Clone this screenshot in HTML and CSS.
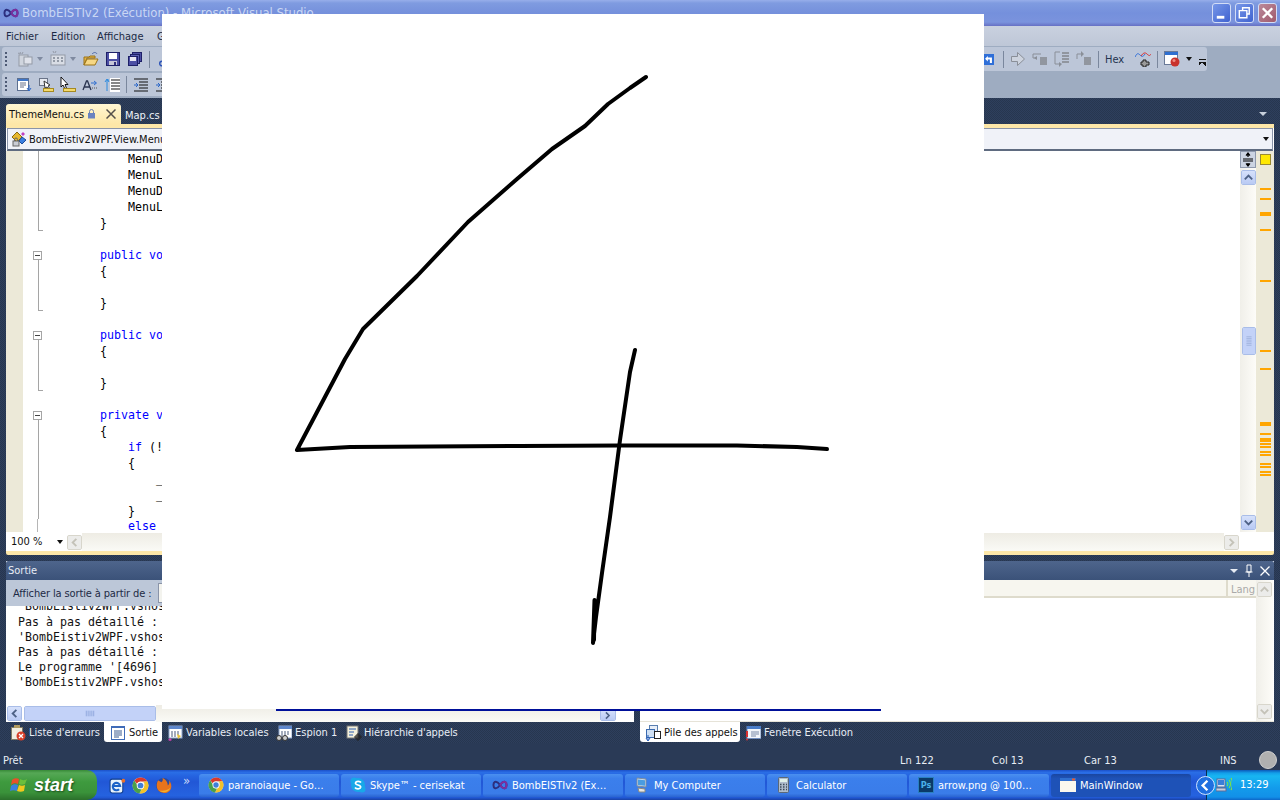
FILE: index.html
```html
<!DOCTYPE html>
<html lang="fr">
<head>
<meta charset="utf-8">
<title>BombEISTIv2 (Exécution) - Microsoft Visual Studio</title>
<link rel="stylesheet" href="styles.css">
</head>
<body>
<svg class="sprite" xmlns="http://www.w3.org/2000/svg">
  <symbol id="vs" viewBox="0 0 16 16"><path d="M8 8C6 5 4 4.500 2.800 5 1 5.800 1 10.200 2.800 11 4 11.500 6 11 8 8 10 5 12 4.500 13.200 5 15 5.800 15 10.200 13.200 11 12 11.500 10 11 8 8Z" fill="none" stroke="#2c2f7f" stroke-width="2"/><path d="M8 8C10 5 12 4.500 13.200 5 15 5.800 15 10.200 13.200 11 12 11.500 10 11 8 8" fill="none" stroke="#7d2f9f" stroke-width="2"/></symbol>
  <symbol id="ol-line" viewBox="0 0 21 16"><rect x="15" width="1" height="16" fill="#a5a5a5"/></symbol>
  <symbol id="ol-tick" viewBox="0 0 21 16"><path d="M15 0h1v15h4v1h-5z" fill="#a5a5a5"/></symbol>
  <symbol id="ol-box" viewBox="0 0 21 16"><rect x="15" y="13" width="1" height="3" fill="#a5a5a5"/><rect x="10.500" y="4.500" width="8" height="8" fill="#fff" stroke="#a5a5a5"/><rect x="12" y="8" width="5" height="1" fill="#444"/></symbol>
  <symbol id="newproj" viewBox="0 0 16 16"><rect x="2" y="4" width="9" height="11" fill="#d4d8e0" stroke="#8d939e"/><rect x="7" y="6" width="8" height="7" fill="#e6e8ee" stroke="#8d939e"/><path d="M3 1l1 2M6 1L5 3M1 2l2 1" stroke="#8d939e"/></symbol>
  <symbol id="additem" viewBox="0 0 16 16"><rect x="1" y="4" width="14" height="10" fill="#dfe2e8" stroke="#8d939e"/><path d="M3 7h2M7 7h2M11 7h2M3 10h2M7 10h2M11 10h2" stroke="#8d939e" stroke-width="2"/><path d="M3 0l1 2M6 0L5 2" stroke="#8d939e"/></symbol>
  <symbol id="folder" viewBox="0 0 16 16"><path d="M1 14V6h5l1-1h5v2H4L1 14z" fill="#e6b646" stroke="#9a7318"/><path d="M1 14L4 8h11l-3 6z" fill="#f6d784" stroke="#9a7318"/><path d="M9 3c2-2 4-2 5 0" fill="none" stroke="#4f6aa8"/></symbol>
  <symbol id="save" viewBox="0 0 16 16"><rect x="1.500" y="1.500" width="13" height="13" fill="#4c4fa4" stroke="#1e2068"/><rect x="4" y="2" width="8" height="6" fill="#fff"/><rect x="4" y="10" width="8" height="4" fill="#c8c8d8"/><rect x="9" y="11" width="2" height="3" fill="#30307a"/></symbol>
  <symbol id="saveall" viewBox="0 0 16 16"><rect x="5.500" y="1.500" width="9" height="9" fill="#4c4fa4" stroke="#1e2068"/><rect x="3.500" y="3.500" width="9" height="9" fill="#5c60b4" stroke="#1e2068"/><rect x="1.500" y="5.500" width="9" height="9" fill="#4c4fa4" stroke="#1e2068"/><rect x="3" y="6" width="6" height="4" fill="#e8e8f4"/></symbol>
  <symbol id="scissor" viewBox="0 0 16 16"><path d="M5 1l5 9M11 1L6 10" stroke="#555" fill="none"/><circle cx="4" cy="12.500" r="2.300" fill="none" stroke="#2f55b8" stroke-width="1.500"/><circle cx="12" cy="12.500" r="2.300" fill="none" stroke="#2f55b8" stroke-width="1.500"/></symbol>
  <symbol id="doclist" viewBox="0 0 16 16"><rect x="1.500" y="1.500" width="11" height="12" fill="#fff" stroke="#5c6f90"/><rect x="2" y="2" width="10" height="2" fill="#3f76c8"/><path d="M4 6h6M4 8h6M4 10h4" stroke="#66708a"/><path d="M13 8v5M11 11l2 3 2-3" stroke="#2a66c8" fill="none"/></symbol>
  <symbol id="tagarrow" viewBox="0 0 16 16"><rect x="1.500" y="1.500" width="8" height="7" fill="#e7eaf0" stroke="#6a7488"/><path d="M6 4l6 4-2 1 2 3-1 1-2-3-2 1z" fill="#fff" stroke="#333"/><rect x="5.500" y="11.500" width="10" height="3" fill="#f5d96b" stroke="#a58a20"/></symbol>
  <symbol id="cursorbar" viewBox="0 0 16 16"><path d="M1 0v10l2-2 2 4 1.500-.7L5 7.500h3z" fill="#fff" stroke="#000" stroke-width=".9"/><rect x="3.500" y="11.500" width="12" height="3" fill="#f5d96b" stroke="#a58a20"/></symbol>
  <symbol id="aarrow" viewBox="0 0 16 16"><path d="M1 13L4.500 4h1L9 13M2.500 10h5" fill="none" stroke="#2a3450" stroke-width="1.300"/><path d="M9 6h5M12 4l2.500 2L12 8" fill="none" stroke="#2f6fd0"/><path d="M10 11h1M12 11h1M14 11h1" stroke="#555"/></symbol>
  <symbol id="bracketdoc" viewBox="0 0 16 16"><path d="M3 14V3h2M1 5l2-3 2 3" fill="none" stroke="#2a8ae0"/><rect x="6" y="1" width="10" height="14" fill="#fff"/><path d="M7 3h9M7 6h9M7 9h9M7 12h9" stroke="#111" stroke-width="1.200"/></symbol>
  <symbol id="indent" viewBox="0 0 16 16"><path d="M1 2h14M6 5h9M6 8h9M6 11h9M1 14h14" stroke="#111"/><path d="M1 8h3M3 6l2 2-2 2" fill="none" stroke="#2a66c8"/></symbol>
  <symbol id="backblue" viewBox="0 0 16 16"><rect width="16" height="16" fill="#2f6fd8"/><path d="M7 3L3 7l4 4V8h3v5h3V5H7z" fill="#fff"/></symbol>
  <symbol id="rightgray" viewBox="0 0 16 16"><path d="M1.500 5.500h6v-4l7 6.500-7 6.500v-4h-6z" fill="#cdd3de" stroke="#8a8f98"/></symbol>
  <symbol id="step1" viewBox="0 0 16 16"><path d="M1 3h8M1 3v4h4" fill="none" stroke="#8a8f98"/><path d="M5 5l-3 2 3 2z" fill="#8a8f98"/><path d="M8 7h7M8 9h7M8 11h7M8 13h7" stroke="#666"/></symbol>
  <symbol id="step2" viewBox="0 0 16 16"><path d="M6 1H1v12h4" fill="none" stroke="#8a8f98"/><path d="M5 11l3 2-3 3z" fill="#8a8f98"/><path d="M8 2h7M8 5h7M8 8h7M8 11h7" stroke="#666"/></symbol>
  <symbol id="step3" viewBox="0 0 16 16"><path d="M1 8V3h6" fill="none" stroke="#8a8f98"/><path d="M5 0l3 3-3 3z" fill="#8a8f98"/><path d="M8 7h7M8 9h7M8 11h7M8 13h7" stroke="#666"/></symbol>
  <symbol id="wave" viewBox="0 0 16 16"><path d="M0 6c2-4 3-4 5-2s3 2 5-1" fill="none" stroke="#2f6fd8"/><path d="M6 5c2-3 4-4 6-2s3 2 4 0" fill="none" stroke="#d83030"/><path d="M8 9h3v2h3v3h-3v2H8v-2H6v-3h2z" fill="#999" stroke="#222"/></symbol>
  <symbol id="winrec" viewBox="0 0 16 16"><rect x=".5" y=".5" width="13" height="13" fill="#fff" stroke="#6a7a98"/><rect x="1" y="1" width="13" height="3" fill="#2f6fd0"/><circle cx="11" cy="11" r="4.500" fill="#c8322c"/><circle cx="10" cy="9.500" r="1.500" fill="#ee8a80"/></symbol>
  <symbol id="lock" viewBox="0 0 9 10"><path d="M2.500 4V2.500a2 2 0 0 1 4 0V4" fill="none" stroke="#6a7fb0"/><rect x="1" y="4" width="7" height="5.500" fill="#6a83c0"/></symbol>
  <symbol id="nsicon" viewBox="0 0 16 16"><path d="M6 1l5 5-5 5-5-5z" fill="#e8b82c" stroke="#8a6a10"/><path d="M11 6l4 3-4 4-3-3z" fill="#3a7fe0" stroke="#1a4a9a"/><rect x="2" y="10" width="6" height="5" fill="#c9ccd4" stroke="#666"/><path d="M3.500 10V8.500a1.500 1.500 0 0 1 3 0V10" fill="none" stroke="#666"/><path d="M12 1l2 2-2 2-2-2z" fill="#c040c0"/></symbol>
  <symbol id="errlist" viewBox="0 0 16 16"><rect x="1.500" y="2.500" width="11" height="12" fill="#f2efe2" stroke="#7f7a66"/><rect x="4" y="0" width="6" height="3" fill="#b09a60"/><circle cx="11" cy="11" r="4.500" fill="#d8402a"/><path d="M9 9l4 4M13 9l-4 4" stroke="#fff" stroke-width="1.300"/></symbol>
  <symbol id="outicon" viewBox="0 0 16 16"><rect x="1" y="1" width="14" height="14" fill="#3f6bb8"/><rect x="2" y="3" width="12" height="11" fill="#fff"/><path d="M4 6h8M4 8h8M4 10h8M4 12h5" stroke="#3a5a90"/></symbol>
  <symbol id="locals" viewBox="0 0 16 16"><rect x="2" y="1" width="13" height="12" fill="#fff" stroke="#8fa6cc"/><rect x="2" y="1" width="13" height="3" fill="#5f87cc"/><path d="M4 7h9M4 9h9M4 11h6" stroke="#4a5a7a" stroke-dasharray="2 1"/><path d="M10 9l4 2-3 3z" fill="#e8c23a"/><path d="M3 13l2 2-2 1-2-1z" fill="#d040b0"/></symbol>
  <symbol id="watch" viewBox="0 0 16 16"><rect x="3" y="1" width="13" height="12" fill="#fff" stroke="#8fa6cc"/><rect x="3" y="1" width="13" height="3" fill="#5f87cc"/><path d="M5 7h9M5 9h9M5 11h6" stroke="#4a5a7a" stroke-dasharray="2 1"/><circle cx="3" cy="13" r="2.500" fill="#ccc" stroke="#333"/><circle cx="9" cy="13" r="2.500" fill="#ccc" stroke="#333"/></symbol>
  <symbol id="hier" viewBox="0 0 16 16"><rect x="1" y="1" width="11" height="12" fill="#f4f1dc" stroke="#777"/><path d="M3 4h7M3 7h5M3 10h4" stroke="#2f5fb0"/><path d="M12 8v8M8 12h8M10 10h4v4h-4z" stroke="#222" fill="none"/></symbol>
  <symbol id="stack" viewBox="0 0 16 16"><rect x="4.500" y=".5" width="8" height="8" fill="#e7eef8" stroke="#5a7fb0"/><rect x="1.500" y="4.500" width="8" height="8" fill="#cfe0f4" stroke="#3a6ab0"/><rect x="9.500" y="6.500" width="6" height="7" fill="#fff" stroke="#222"/><path d="M3 10v5M1 13l2 3 2-3" stroke="#1f58b8" fill="none"/></symbol>
  <symbol id="immediate" viewBox="0 0 16 16"><rect x="2" y="1.500" width="14" height="12" fill="#f2f5fa" stroke="#6f8cbe"/><rect x="2" y="1" width="14" height="3" fill="#4a7cc8"/><path d="M6 7h8M6 9h8M6 11h5" stroke="#7a8aa8" stroke-width="1"/><path d="M2 6v6" stroke="#d83030" stroke-width="2"/><circle cx="2" cy="14.500" r="1" fill="#d83030"/></symbol>
  <symbol id="xpflag" viewBox="0 0 20 20"><path d="M2 5c2-2 5-2 7-1l-1 5C6 8 3 8 1 10z" fill="#e8502a"/><path d="M10 4c2 1 4 2 7 0l-2 5c-2 1-5 1-6 0z" fill="#6cbf3c"/><path d="M1 11c2-2 5-2 7-1l-1 6c-2-1-5-1-7 0z" fill="#3a7fe0"/><path d="M9 10c2 1 4 1 6 0l-1 6c-2 1-5 1-7 0z" fill="#f2c81e"/></symbol>
  <symbol id="ie" viewBox="0 0 16 16"><rect x="1" y="2" width="12" height="13" rx="2" fill="#e6f2fc" stroke="#12408f"/><path d="M4 8.500h6.500A3.500 3.500 0 1 0 9.500 11.500" fill="none" stroke="#1a62c8" stroke-width="2"/><circle cx="13.500" cy="3.500" r="1.800" fill="#e8702c"/></symbol>
  <symbol id="chrome" viewBox="0 0 16 16"><circle cx="8" cy="8" r="7.500" fill="#ddd"/><path d="M8 .5a7.500 7.500 0 0 1 6.500 3.800H8a3.700 3.700 0 0 0-3.300 2L2.200 3.200A7.500 7.500 0 0 1 8 .5z" fill="#d9392c"/><path d="M14.500 4.300A7.500 7.500 0 0 1 7 15.400l3.300-5.500a3.700 3.700 0 0 0 .4-5.600z" fill="#f2c229"/><path d="M7 15.400A7.500 7.500 0 0 1 2.200 3.200l3 5.300A3.700 3.700 0 0 0 9 11.500z" fill="#4aa04a"/><circle cx="8" cy="8" r="3.500" fill="#fff"/><circle cx="8" cy="8" r="2.700" fill="#3f7fd8"/></symbol>
  <symbol id="firefox" viewBox="0 0 16 16"><circle cx="8" cy="8" r="7" fill="#2a4a9c"/><path d="M3 3c-2 3-2 8 1 10.500s9 2.500 11-2.500c1-3 0-6-2-8 1 2 .5 4-1 5 0-3-2-6-5-7 1 2 0 3-1 4-1-1-2-1-3-2z" fill="#e8741c"/><path d="M4 13c3 2.500 9 1.500 10.500-3-2 2-6 3-10.500 3z" fill="#f4b02a"/></symbol>
  <symbol id="skype" viewBox="0 0 16 16"><circle cx="8" cy="8" r="7" fill="#18a8e8"/><circle cx="4" cy="4" r="3.500" fill="#18a8e8"/><circle cx="12" cy="12" r="3.500" fill="#18a8e8"/><path d="M11 5.500C10 4 6 3.800 5.500 6c-.4 2.500 5.500 1.500 5.200 4.200-.4 2.200-4.700 2-5.700.3" fill="none" stroke="#fff" stroke-width="1.700"/></symbol>
  <symbol id="mypc" viewBox="0 0 16 16"><path d="M3 1l9 1v8l-9-1z" fill="#cfe0ee" stroke="#7d8da0"/><path d="M4 2.500l7 .8v5.500l-7-.8z" fill="#4a9ce0"/><path d="M4 11l7 1v3H5z" fill="#e8e8e4" stroke="#8a8a80"/></symbol>
  <symbol id="calc" viewBox="0 0 16 16"><rect x="2.500" y=".5" width="10" height="15" rx="1" fill="#aebccb" stroke="#5a6878"/><rect x="4" y="2" width="7" height="3" fill="#dff0e8"/><path d="M4 7.500h1.500M7 7.500h1.500M10 7.500h1M4 10h1.500M7 10h1.500M10 10h1M4 12.500h1.500M7 12.500h1.500M10 12.500h1" stroke="#3d4a58" stroke-width="1.300"/></symbol>
  <symbol id="win" viewBox="0 0 16 16"><rect y="1" width="16" height="14" fill="#fff"/><rect y="1" width="16" height="3" fill="#2f6fd0"/><rect x="12" y="1.500" width="3" height="2" fill="#e85a30"/><rect y="4" width="16" height="11" fill="#fbf8ee"/></symbol>
  <symbol id="tray" viewBox="0 0 16 16"><rect x="1" y="2" width="8" height="8" fill="#d8e4f4" stroke="#5a6a9a"/><rect x="2" y="3" width="6" height="5" fill="#3a7fd8"/><rect x="0" y="11" width="10" height="3" fill="#c8d0dc" stroke="#5a6a9a"/><path d="M11 5c1 1 1 3 0 4M13 3c2 2 2 6 0 8M15 1c2 3 2 9 0 12" fill="none" stroke="#7ee04a" stroke-width="1.200"/></symbol>
</svg>

<div class="app">
  <header class="titlebar">
    <svg class="ico16 title-ico"><use href="#vs"/></svg>
    <span class="title-text">BombEISTIv2 (Exécution) - Microsoft Visual Studio</span>
    <div class="win-btns">
      <span class="win-btn"><svg viewBox="0 0 18 18"><rect x="4" y="12" width="8" height="3" fill="#fff"/></svg></span>
      <span class="win-btn"><svg viewBox="0 0 18 18"><path d="M7 6V3.500h7V10h-2.500M3.500 6.500h8V14h-8z" fill="none" stroke="#fff" stroke-width="1.500"/></svg></span>
      <span class="win-btn win-close"><svg viewBox="0 0 18 18"><path d="M4 4l10 10M14 4L4 14" stroke="#fff" stroke-width="2.500"/></svg></span>
    </div>
  </header>

  <nav class="menubar">
    <span class="m-fichier">Fichier</span><span class="m-edition">Edition</span><span class="m-affichage">Affichage</span><span>G</span>
  </nav>

  <div class="toolbars">
    <div class="toolbar tb-one">
      <i class="grip"></i>
      <div class="tb-group tb-left">
        <svg class="ico16 dim"><use href="#newproj"/></svg><i class="drop dim-drop"></i>
        <svg class="ico16 dim"><use href="#additem"/></svg><i class="drop dim-drop"></i>
        <svg class="ico16"><use href="#folder"/></svg>
        <svg class="ico16"><use href="#save"/></svg>
        <svg class="ico16"><use href="#saveall"/></svg>
        <i class="sep"></i>
        <svg class="ico16"><use href="#scissor"/></svg>
      </div>
      <div class="tb-group tb-right">
        <svg class="ico-back"><use href="#backblue"/></svg>
        <i class="sep"></i>
        <svg class="ico16"><use href="#rightgray"/></svg>
        <svg class="ico16"><use href="#step1"/></svg>
        <svg class="ico16"><use href="#step2"/></svg>
        <svg class="ico16"><use href="#step3"/></svg>
        <i class="sep"></i>
        <span class="hex">Hex</span>
        <svg class="ico16"><use href="#wave"/></svg>
        <i class="sep"></i>
        <svg class="ico16"><use href="#winrec"/></svg>
        <i class="drop"></i>
        <i class="overflow"></i>
      </div>
    </div>
    <div class="toolbar tb-two">
      <i class="grip"></i>
      <div class="tb-group tb-left2">
        <svg class="ico16"><use href="#doclist"/></svg>
        <svg class="ico16"><use href="#tagarrow"/></svg>
        <svg class="ico16"><use href="#cursorbar"/></svg>
        <svg class="ico16"><use href="#aarrow"/></svg>
        <svg class="ico16"><use href="#bracketdoc"/></svg>
        <i class="sep"></i>
        <svg class="ico16"><use href="#indent"/></svg>
        <svg class="ico16"><use href="#indent"/></svg>
      </div>
    </div>
  </div>

  <div class="doctabs">
    <div class="doctab-active">
      <span class="doctab-name">ThemeMenu.cs</span>
      <svg class="lock"><use href="#lock"/></svg>
      <svg class="doctab-x" viewBox="0 0 10 10"><path d="M.5.5l9 9M9.500.5l-9 9" stroke="#55504a" stroke-width="1.500"/></svg>
    </div>
    <span class="doctab">Map.cs</span>
    <i class="tabs-arrow"></i>
  </div>

  <section class="editor">
    <div class="addr">
      <svg class="ico16"><use href="#nsicon"/></svg>
      <span class="addr-text">BombEistiv2WPF.View.Menu</span>
      <i class="drop addr-drop"></i>
    </div>
    <div class="ed-body">
      <div class="strip"></div>
      <div class="code">
        <div class="row"><svg class="gut"><use href="#ol-line"/></svg><pre>            MenuD</pre></div>
        <div class="row"><svg class="gut"><use href="#ol-line"/></svg><pre>            MenuL</pre></div>
        <div class="row"><svg class="gut"><use href="#ol-line"/></svg><pre>            MenuD</pre></div>
        <div class="row"><svg class="gut"><use href="#ol-line"/></svg><pre>            MenuL</pre></div>
        <div class="row"><svg class="gut"><use href="#ol-tick"/></svg><pre>        }</pre></div>
        <div class="row"><svg class="gut"></svg><pre> </pre></div>
        <div class="row"><svg class="gut"><use href="#ol-box"/></svg><pre>        <b>public vo</b></pre></div>
        <div class="row"><svg class="gut"><use href="#ol-line"/></svg><pre>        {</pre></div>
        <div class="row"><svg class="gut"><use href="#ol-line"/></svg><pre> </pre></div>
        <div class="row"><svg class="gut"><use href="#ol-tick"/></svg><pre>        }</pre></div>
        <div class="row"><svg class="gut"></svg><pre> </pre></div>
        <div class="row"><svg class="gut"><use href="#ol-box"/></svg><pre>        <b>public vo</b></pre></div>
        <div class="row"><svg class="gut"><use href="#ol-line"/></svg><pre>        {</pre></div>
        <div class="row"><svg class="gut"><use href="#ol-line"/></svg><pre> </pre></div>
        <div class="row"><svg class="gut"><use href="#ol-tick"/></svg><pre>        }</pre></div>
        <div class="row"><svg class="gut"></svg><pre> </pre></div>
        <div class="row"><svg class="gut"><use href="#ol-box"/></svg><pre>        <b>private v</b></pre></div>
        <div class="row"><svg class="gut"><use href="#ol-line"/></svg><pre>        {</pre></div>
        <div class="row"><svg class="gut"><use href="#ol-line"/></svg><pre>            <b>if</b> (!</pre></div>
        <div class="row"><svg class="gut"><use href="#ol-line"/></svg><pre>            {</pre></div>
        <div class="row"><svg class="gut"><use href="#ol-line"/></svg><pre>                _</pre></div>
        <div class="row"><svg class="gut"><use href="#ol-line"/></svg><pre>                _</pre></div>
        <div class="row"><svg class="gut"><use href="#ol-line"/></svg><pre>            }</pre></div>
        <div class="row row-last"><svg class="gut"><use href="#ol-line"/></svg><pre>            <b>else</b></pre></div>
      </div>
      <div class="vscroll">
        <div class="splitter"><svg viewBox="0 0 14 15"><path d="M2 7h10M2 9h10" stroke="#000"/><path d="M7 1v4M5 3.500L7 1l2 2.500M7 14v-3M5 11.500L7 14l2-2.500" stroke="#000" stroke-width="1.200" fill="#000"/></svg></div>
        <div class="sb-btn sb-up"><svg viewBox="0 0 14 14"><path d="M3 9l4-4 4 4" fill="none" stroke="#4d6185" stroke-width="2"/></svg></div>
        <div class="sb-thumb"><svg viewBox="0 0 14 28"><path d="M4 9h6M4 11h6M4 13h6M4 15h6M4 17h6M4 19h6" stroke="#9fb2dc"/></svg></div>
        <div class="sb-btn sb-down"><svg viewBox="0 0 14 14"><path d="M3 5l4 4 4-4" fill="none" stroke="#4d6185" stroke-width="2"/></svg></div>
      </div>
      <svg class="marks" viewBox="0 0 18 381">
        <rect x="4.500" y="3.500" width="10" height="10" fill="#ffe800" stroke="#9a8a30"/>
        <g fill="#ffa500">
          <rect x="4" y="37" width="11" height="2"/><rect x="4" y="47" width="11" height="2"/><rect x="4" y="61" width="11" height="4"/><rect x="4" y="78" width="11" height="2"/><rect x="4" y="129" width="11" height="2"/><rect x="4" y="199" width="11" height="2"/><rect x="4" y="217" width="11" height="2"/><rect x="4" y="271" width="11" height="4"/><rect x="4" y="282" width="11" height="2"/><rect x="4" y="287" width="11" height="4"/><rect x="4" y="292" width="11" height="2"/><rect x="4" y="295" width="11" height="2"/><rect x="4" y="300" width="11" height="2"/><rect x="4" y="303" width="11" height="2"/><rect x="4" y="312" width="11" height="2"/><rect x="4" y="315" width="11" height="2"/><rect x="4" y="320" width="11" height="2"/><rect x="4" y="323" width="11" height="2"/>
        </g>
      </svg>
    </div>
    <div class="ed-foot">
      <div class="zoom"><span>100 %</span><i class="drop"></i></div>
      <div class="hbtn hbtn-left"><svg viewBox="0 0 14 14"><path d="M9 3L5 7l4 4" fill="none" stroke="#c4c2b8" stroke-width="2"/></svg></div>
      <div class="htrack"></div>
      <div class="hbtn"><svg viewBox="0 0 14 14"><path d="M5 3l4 4-4 4" fill="none" stroke="#c4c2b8" stroke-width="2"/></svg></div>
      <div class="ed-corner"></div>
    </div>
  </section>

  <div class="panels">
    <section class="panel panel-out">
      <div class="panel-head"><span>Sortie</span></div>
      <div class="out-tools"><span>Afficher la sortie à partir de :</span><i class="combo"></i></div>
      <div class="out-text">
        <pre class="clip-line">'BombEistiv2WPF.vshos</pre>
        <pre>Pas à pas détaillé :</pre>
        <pre>'BombEistiv2WPF.vshos</pre>
        <pre>Pas à pas détaillé :</pre>
        <pre>Le programme '[4696]</pre>
        <pre>'BombEistiv2WPF.vshos</pre>
      </div>
      <div class="out-scroll">
        <div class="sb-btn sb-left"><svg viewBox="0 0 14 14"><path d="M9 3L5 7l4 4" fill="none" stroke="#4d6185" stroke-width="2"/></svg></div>
        <div class="h-thumb"><svg viewBox="0 0 132 14"><path d="M62 4v6M64 4v6M66 4v6M68 4v6M70 4v6" stroke="#8fa6dc"/></svg></div>
        <div class="htrack"></div>
        <div class="sb-btn sb-right"><svg viewBox="0 0 14 14"><path d="M5 3l4 4-4 4" fill="none" stroke="#4d6185" stroke-width="2"/></svg></div>
        <div class="out-corner"></div>
      </div>
    </section>
    <section class="panel panel-stack">
      <div class="panel-head panel-head-r">
        <i class="head-arrow"></i>
        <svg class="head-pin" viewBox="0 0 8 13"><path d="M2 1h4v7H2zM.5 8h7M4 8v5" fill="none" stroke="#fff"/></svg>
        <svg class="head-x" viewBox="0 0 10 10"><path d="M.5.5l9 9M9.500.5l-9 9" stroke="#fff" stroke-width="1.300"/></svg>
      </div>
      <div class="stack-body">
        <div class="grid-head"><span class="gh-cell"></span><span class="gh-lang">Lang:</span></div>
        <div class="stack-scroll">
          <div class="sb-gray"><svg viewBox="0 0 14 14"><path d="M3 9l4-4 4 4" fill="none" stroke="#c4c2b8" stroke-width="2"/></svg></div>
          <div class="sb-gray"><svg viewBox="0 0 14 14"><path d="M3 5l4 4 4-4" fill="none" stroke="#c4c2b8" stroke-width="2"/></svg></div>
        </div>
      </div>
    </section>
  </div>

  <div class="btabs">
    <div class="btab-group">
      <span class="btab btab-err"><svg class="ico16"><use href="#errlist"/></svg>Liste d'erreurs</span>
      <span class="btab btab-on btab-sortie"><svg class="ico16"><use href="#outicon"/></svg>Sortie</span>
      <span class="btab btab-loc"><svg class="ico16"><use href="#locals"/></svg>Variables locales</span>
      <span class="btab btab-esp"><svg class="ico16"><use href="#watch"/></svg>Espion 1</span>
      <span class="btab btab-hier"><svg class="ico16"><use href="#hier"/></svg>Hiérarchie d'appels</span>
    </div>
    <div class="btab-group">
      <span class="btab btab-on btab-pile"><svg class="ico16"><use href="#stack"/></svg>Pile des appels</span>
      <span class="btab btab-fen"><svg class="ico16"><use href="#immediate"/></svg>Fenêtre Exécution</span>
    </div>
  </div>

  <footer class="status">
    <span class="st-ready">Prêt</span>
    <span class="st-ln">Ln 122</span>
    <span class="st-col">Col 13</span>
    <span class="st-car">Car 13</span>
    <span class="st-ins">INS</span>
    <i class="st-grip"></i>
  </footer>

  <div class="taskbar">
    <div class="start"><svg class="flag"><use href="#xpflag"/></svg><span>start</span></div>
    <div class="quick">
      <svg class="ico18"><use href="#ie"/></svg>
      <svg class="ico18"><use href="#chrome"/></svg>
      <svg class="ico18"><use href="#firefox"/></svg>
      <span class="more">»</span>
    </div>
    <div class="tasks">
      <div class="task"><svg class="ico16"><use href="#chrome"/></svg><span>paranoiaque - Go…</span></div>
      <div class="task"><svg class="ico16"><use href="#skype"/></svg><span>Skype™ - cerisekat</span></div>
      <div class="task"><svg class="ico16"><use href="#vs"/></svg><span>BombEISTIv2 (Ex…</span></div>
      <div class="task"><svg class="ico16"><use href="#mypc"/></svg><span>My Computer</span></div>
      <div class="task"><svg class="ico16"><use href="#calc"/></svg><span>Calculator</span></div>
      <div class="task"><b class="ps">Ps</b><span>arrow.png @ 100…</span></div>
      <div class="task task-on"><svg class="ico16"><use href="#win"/></svg><span>MainWindow</span></div>
    </div>
    <div class="chev"><svg viewBox="0 0 18 18"><path d="M11 4L6 9l5 5" fill="none" stroke="#fff" stroke-width="2.500"/></svg></div>
    <div class="tray"><svg class="ico16"><use href="#tray"/></svg><span>13:29</span></div>
  </div>

  <svg class="canvas" viewBox="0 0 822 697">
    <rect width="822" height="695" fill="#fff"/>
    <rect x="114" y="695" width="605" height="2" fill="#00109a"/>
    <g fill="none" stroke="#000" stroke-width="4" stroke-linecap="round" stroke-linejoin="round" transform="translate(-162 -14)">
      <path d="M646 77L630 88 608 104 585 126 552 149 517 179 468 222 417 276 363 329 345 359 297 450 350 447 520 446 620 445.500 737 445.500 797 447 827 449"/>
      <path d="M635 350L630 372 620 440 610 517 602 573 596 617 593 643 594.500 600 594 640"/>
    </g>
  </svg>
</div>
</body>
</html>
```

FILE: styles.css
```css
* { box-sizing: border-box; }
html, body { margin: 0; padding: 0; }
body { width: 1280px; height: 800px; overflow: hidden; font: 11px/16px "DejaVu Sans Condensed", "DejaVu Sans", sans-serif; font-stretch: condensed; color: #111; }
i { display: block; font-style: normal; }
pre { margin: 0; font: 11.63px/16px "DejaVu Sans Mono", "Liberation Mono", monospace; }
.sprite { display: none; }
.ico16 { width: 16px; height: 16px; flex: none; display: block; }
.ico18 { width: 17px; height: 17px; flex: none; display: block; }
.app { position: relative; width: 1280px; height: 800px; display: flex; flex-direction: column; overflow: hidden; background: #2a3a56 repeating-conic-gradient(#2e3f5d 0 25%, #27364f 0 50%) 0 0 / 2px 2px; }

/* title */
.titlebar { height: 26px; flex: none; display: flex; align-items: center; padding-left: 3px; background: linear-gradient(#97aeea 0, #7f9be0 12%, #7590dc 50%, #7a93dd 85%, #6670c4 100%); }
.title-ico { margin-right: 3px; }
.title-text { font-size: 13px; color: #cad7f4; white-space: nowrap; }
.win-btns { margin-left: auto; display: flex; gap: 4px; padding-right: 3px; }
.win-btn { width: 19px; height: 20px; border: 1px solid #d3ddf6; border-radius: 3px; background: linear-gradient(135deg, #7797e8, #3f62d0); display: block; }
.win-btn svg { display: block; width: 17px; height: 18px; }
.win-close { background: linear-gradient(135deg, #bb8a9b, #a05a6c); }

/* menu */
.menubar { height: 20px; flex: none; display: flex; align-items: center; padding: 1px 0 0 6px; color: #1c2a45; background: linear-gradient(#c9d1df, #bec7d7); }
.m-fichier { width: 45px; } .m-edition { width: 46px; } .m-affichage { width: 60px; }

/* toolbars */
.toolbars { height: 52px; flex: none; background: #9eacc1; padding: 1px 0 0 2px; display: flex; flex-direction: column; gap: 2px; }
.toolbar { background: #bcc6d8; border-radius: 3px; display: flex; align-items: center; padding-left: 3px; }
.tb-one { height: 24px; width: 1205px; }
.tb-two { height: 23px; width: 700px; }
.grip { width: 2px; height: 15px; flex: none; background: repeating-linear-gradient(#4d5a74 0 2px, transparent 2px 4px); }
.tb-group { display: flex; align-items: center; gap: 6px; }
.tb-left { margin-left: 10px; }
.tb-left .dim { opacity: .85; }
.tb-left .drop { margin: 0 1px 0 -2px; }
.tb-left .sep { margin-right: 2px; }
.tb-left2 { margin-left: 9px; }
.tb-right { margin-left: auto; }
.ico-back { width: 11px; height: 11px; display: block; margin-right: 3px; }
.sep { width: 1px; height: 17px; flex: none; background: #7a879d; }
.hex { color: #24344f; width: 24px; padding-top: 1px; }
.drop { width: 0; height: 0; flex: none; border: 3px solid transparent; border-top: 4px solid #111; border-bottom: 0; }
.dim-drop { border-top-color: #7f8aa0; }
.tb-right .drop { margin-right: 1px; }
.overflow { width: 7px; height: 8px; margin: 8px 1px 0 0; border-top: 1px solid #111; background: linear-gradient(135deg, #111 0 50%, transparent 50%) 0 2px / 4px 4px no-repeat, linear-gradient(225deg, #111 0 50%, transparent 50%) 3px 2px / 4px 4px no-repeat; }

/* doc tabs */
.doctabs { height: 26px; flex: none; display: flex; align-items: flex-end; padding-left: 6px; }
.doctab-active { width: 115px; height: 20px; display: flex; align-items: center; padding-left: 3px; border-radius: 3px 3px 0 0; background: linear-gradient(#fff6d2, #fde7a8); color: #111; }
.doctab-name { width: 78px; padding-top: 2px; }
.lock { width: 9px; height: 10px; display: block; }
.doctab-x { width: 10px; height: 10px; display: block; margin-left: 10px; }
.doctab { color: #eef2f8; margin-left: 4px; height: 20px; line-height: 23px; }
.tabs-arrow { margin-left: auto; margin-right: 13px; margin-bottom: 8px; width: 0; height: 0; border: 4px solid transparent; border-top: 4px solid #c8d0dc; border-bottom: 0; }

/* editor */
.editor { height: 431px; flex: none; margin: 0 6px; background: #fff; border-top: 4px solid #fde7a8; border-bottom: 4px solid #fde7a8; display: flex; flex-direction: column; border-radius: 0 0 2px 2px; }
.addr { height: 23px; flex: none; display: flex; align-items: center; background: #f0f2f8; border: 1px solid #8a94a8; border-bottom: 2px solid #5f6b80; margin: 0 1px; padding-left: 3px; }
.addr-text { margin-left: 2px; color: #111; padding-top: 2px; }
.addr-drop { margin-left: auto; margin-right: 3px; }
.ed-body { height: 381px; flex: none; display: flex; }
.strip { width: 17px; flex: none; background: #ece9d8; }
.code { flex: 1; }
.row { height: 16px; display: flex; }
.row-last { height: 13px; }
.row pre { color: #000; white-space: pre; }
.row-last pre { line-height: 11px; padding-top: 2px; }
.row b { font-weight: normal; color: #0000ff; }
.gut { width: 21px; height: 16px; flex: none; display: block; }
.row-last .gut { height: 13px; }
.vscroll { width: 16px; flex: none; background: linear-gradient(90deg, #f0efe9, #fdfcf8); display: flex; flex-direction: column; }
.splitter { height: 17px; flex: none; background: #ccd4e2; border: 1px solid #8e99ad; }
.splitter svg { display: block; width: 14px; height: 15px; }
.sb-btn { width: 15px; height: 15px; flex: none; background: linear-gradient(#d6e1fb, #b9caf4); border: 1px solid #fff; outline: 1px solid #a9bde8; outline-offset: -1px; border-radius: 2px; }
.sb-btn svg, .sb-gray svg, .hbtn svg { display: block; width: 13px; height: 13px; }
.vscroll .sb-btn { margin-left: 1px; }
.sb-up { margin-top: 2px; }
.sb-thumb { width: 14px; height: 28px; flex: none; margin: 142px 0 0 2px; background: #c3d2f8; border: 1px solid #fff; outline: 1px solid #a9bde8; outline-offset: -1px; border-radius: 2px; }
.sb-thumb svg { display: block; width: 12px; height: 26px; }
.sb-down { margin-top: 160px; }
.marks { width: 18px; height: 381px; flex: none; display: block; background: #ece9d8; }
.ed-foot { height: 19px; flex: none; display: flex; align-items: flex-end; background: #fff; }
.zoom { width: 59px; height: 19px; flex: none; display: flex; align-items: center; padding: 1px 0 0 5px; color: #111; }
.zoom .drop { margin-left: auto; margin-right: 2px; }
.hbtn { width: 15px; height: 15px; flex: none; margin-bottom: 1px; background: #ececea; border: 1px solid #fff; outline: 1px solid #d8d6cc; outline-offset: -1px; border-radius: 2px; }
.hbtn-left { margin-left: 2px; }
.htrack { flex: 1; height: 18px; background: linear-gradient(#eeece4, #fafaf6); }
.ed-foot .htrack { align-self: flex-end; }
.ed-corner { width: 35px; flex: none; }

/* panels */
.panels { height: 161px; flex: none; display: flex; gap: 6px; margin: 6px 6px 0; }
.panel { display: flex; flex-direction: column; background: #fff; }
.panel-out { width: 628px; }
.panel-stack { width: 634px; }
.panel-head { height: 19px; flex: none; display: flex; align-items: center; padding: 1px 0 0 2px; color: #e8edf5; background: linear-gradient(#4e658c, #3b5279); border-radius: 2px 2px 0 0; }
.panel-head-r { justify-content: flex-end; padding: 0 4px 0 0; gap: 7px; }
.head-arrow { width: 0; height: 0; border: 4px solid transparent; border-top: 4px solid #e8edf5; border-bottom: 0; }
.head-pin { width: 8px; height: 13px; display: block; }
.head-x { width: 10px; height: 10px; display: block; }
.out-tools { height: 26px; flex: none; display: flex; align-items: center; padding-left: 7px; background: #bcc7d8; color: #1c2a45; }
.out-tools span { padding-top: 1px; letter-spacing: -.13px; }
.combo { width: 12px; height: 20px; margin-left: 7px; background: #f3f3ee; border: 1px solid #8a94a8; }
.out-text { height: 99px; flex: none; padding-left: 12px; overflow: hidden; color: #111; }
.out-text pre { line-height: 15.200px; }
.clip-line { margin-top: -6.700px; }
.out-scroll { height: 17px; flex: none; display: flex; align-items: flex-end; }
.sb-left { margin: 0 2px 1px 1px; }
.sb-right { margin-bottom: 1px; width: 16px; height: 12px; }
.sb-right svg { height: 11px; }
.h-thumb { width: 132px; height: 15px; flex: none; margin-bottom: 1px; background: #c3d2f8; border: 1px solid #fff; outline: 1px solid #a9bde8; outline-offset: -1px; border-radius: 2px; }
.h-thumb svg { display: block; width: 130px; height: 13px; }
.out-scroll .htrack { height: 17px; }
.out-corner { width: 18px; flex: none; height: 17px; background: #fff; }
.stack-body { flex: 1; position: relative; border-bottom: 1px solid #e6e3d8; }
.grid-head { height: 18px; display: flex; background: #f7f6ef; border-bottom: 2px solid #dedbcc; color: #a9a9a9; margin-right: 18px; }
.gh-cell { flex: 1; border-right: 2px solid #dedbcc; }
.gh-lang { width: 28px; padding: 2px 0 0 3px; white-space: nowrap; }
.stack-scroll { position: absolute; right: 1px; top: 0; bottom: 0; width: 17px; background: linear-gradient(90deg, #f0efe9, #fdfcf8); display: flex; flex-direction: column; justify-content: space-between; padding: 2px 0 2px 1px; }
.sb-gray { width: 15px; height: 15px; background: #ececea; border: 1px solid #fff; outline: 1px solid #d8d6cc; outline-offset: -1px; border-radius: 2px; }

/* bottom tabs */
.btabs { height: 21px; flex: none; display: grid; grid-template-columns: 640px 1fr; color: #e8edf5; }
.btab-group { display: flex; }
.btab { height: 20px; padding-top: 2px; display: flex; align-items: center; gap: 3px; white-space: nowrap; }
.btab-on { background: #fff; color: #111; border-radius: 0 0 3px 3px; }
.btab-err { margin-left: 10px; width: 94px; }
.btab-sortie { width: 58px; padding-left: 6px; }
.btab-loc { width: 109px; padding-left: 5px; }
.btab-esp { width: 75px; padding-left: 5px; }
.btab-hier { gap: 2px; letter-spacing: -.1px; }
.btab-pile { width: 100px; padding-left: 5px; }
.btab-fen { padding-left: 5px; }

/* status */
.status { height: 27px; flex: none; background: #2a3a56; color: #e8edf5; display: flex; align-items: center; padding: 8px 3px 0; }
.st-ready { width: 897px; } .st-ln { width: 92px; } .st-col { width: 92px; } .st-car { width: 136px; } .st-ins { width: 39px; }
.st-grip { width: 18px; height: 18px; border-radius: 50%; background: #b0b0b0; border: 1px solid #d0d0d0; margin-top: -1px; }

/* taskbar */
.taskbar { height: 30px; flex: none; display: flex; align-items: center; color: #fff; background: linear-gradient(#1c50c8 0, #2a6ee6 8%, #2563e0 20%, #2157d6 40%, #245ddb 60%, #2562df 85%, #2158d4 92%, #1941a5 100%); }
.start { width: 97px; height: 30px; flex: none; display: flex; align-items: center; padding-left: 10px; gap: 4px; border-radius: 0 10px 10px 0; background: linear-gradient(#388a38 0, #55a855 10%, #3e9a3e 40%, #3a923a 75%, #2b6f2b 100%); font: italic bold 18px/30px "Liberation Sans", sans-serif; text-shadow: 1px 1px 2px #1a4a1a; }
.flag { width: 20px; height: 20px; display: block; }
.quick { width: 102px; flex: none; display: flex; align-items: center; gap: 6px; padding-left: 12px; }
.more { font-size: 13px; color: #c8d8f8; margin: -8px 0 0 5px; }
.tasks { display: flex; gap: 2px; flex: none; }
.task { width: 140px; height: 23px; flex: none; display: flex; align-items: center; gap: 4px; padding-left: 9px; border-radius: 3px; white-space: nowrap; overflow: hidden; background: linear-gradient(#4a8ff0, #3b7fec 20%, #3a7ce9 85%, #2a64d0); }
.task span { padding-top: 2px; }
.task-on { background: linear-gradient(#1a46a0, #1e52b7 20%, #1e52b7); }
.ps { width: 16px; height: 16px; flex: none; background: #0a3a68; border: 1px solid #2a80c0; color: #49b0e8; font-size: 9px; line-height: 14px; text-align: center; }
.chev { width: 19px; height: 19px; flex: none; margin: 0 -9px 0 5px; position: relative; border-radius: 50%; background: #1f6fe0; border: 1px solid #cfe4ff; }
.chev svg { display: block; width: 17px; height: 17px; }
.tray { flex: 1; height: 30px; display: flex; align-items: center; padding-left: 9px; gap: 8px; background: linear-gradient(#0c59b9, #139ee9 10%, #18b5f2 20%, #139beb 60%, #1290e8 90%, #0d66c8); border-left: 1px solid #092e51; }

/* free canvas overlay */
.canvas { position: absolute; left: 162px; top: 14px; width: 822px; height: 697px; display: block; }
```
